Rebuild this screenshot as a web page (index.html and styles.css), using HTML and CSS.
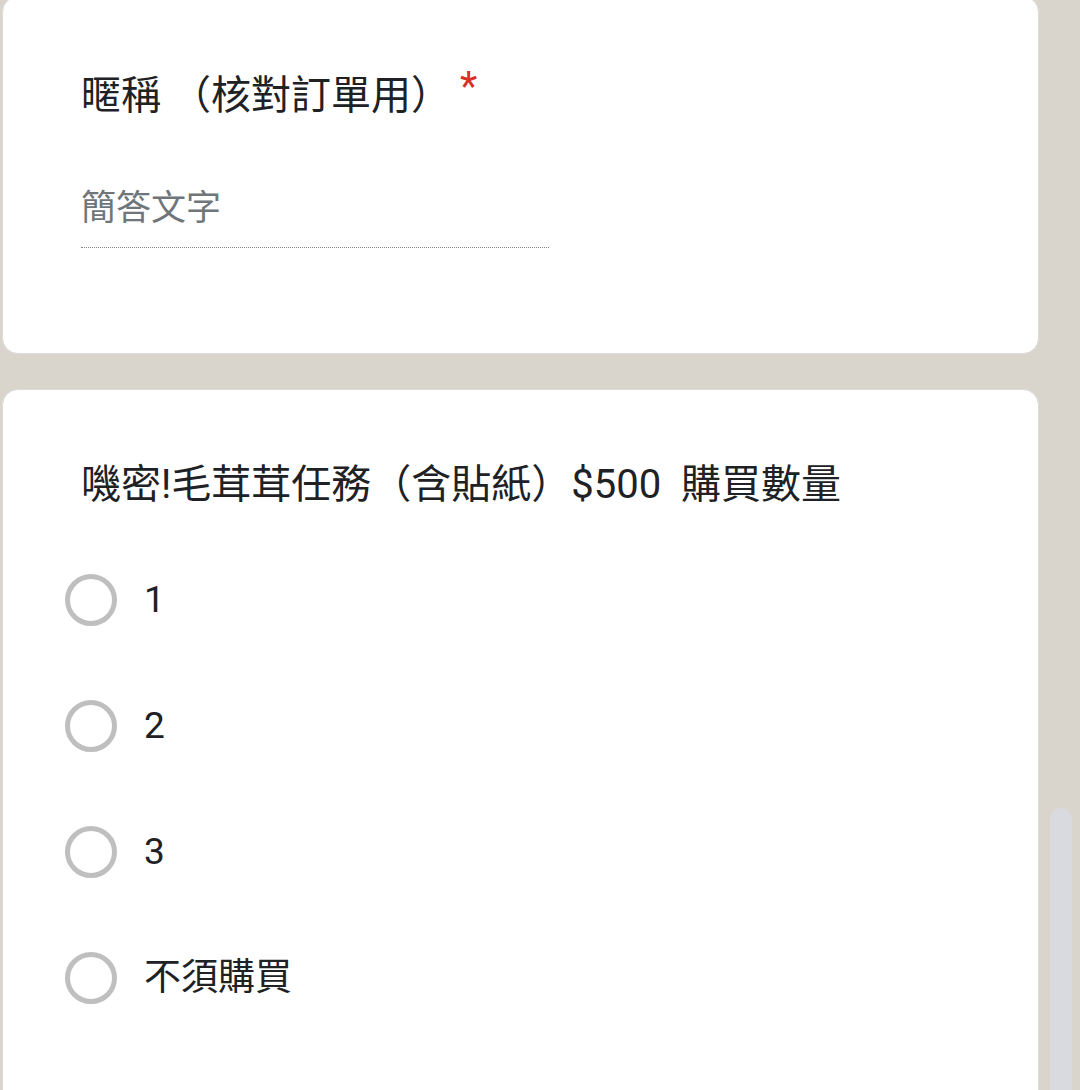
FILE: index.html
```html
<!DOCTYPE html>
<html lang="zh-Hant">
<head>
  <meta charset="UTF-8">
  <meta name="viewport" content="width=device-width, initial-scale=1.0">
  <title>訂購表單</title>
  <link rel="stylesheet" href="styles.css">
</head>
<body>
  <div class="form-page">
    <!-- Nickname question -->
    <div class="question-card first">
      <div class="question-title">暱稱 （核對訂單用）<span class="required">*</span></div>
      <div class="text-input">
        <span class="placeholder">簡答文字</span>
      </div>
    </div>

    <!-- Quantity question -->
    <div class="question-card">
      <div class="question-title">嘰密!毛茸茸任務（含貼紙）$500  購買數量</div>
      <ul class="options">
        <li class="option"><span class="radio"></span><span class="option-label">1</span></li>
        <li class="option"><span class="radio"></span><span class="option-label">2</span></li>
        <li class="option"><span class="radio"></span><span class="option-label">3</span></li>
        <li class="option"><span class="radio"></span><span class="option-label">不須購買</span></li>
      </ul>
    </div>
  </div>

  <!-- Scrollbar thumb drawn over the page edge -->
  <div class="scroll-thumb"></div>
</body>
</html>
```

FILE: styles.css
```css
* {
  margin: 0;
  padding: 0;
  box-sizing: border-box;
}

html,
body {
  height: 100%;
  overflow: hidden;
}

body {
  background: #d9d5cc;
  color: #202124;
  font-family: Roboto, "Noto Sans CJK TC", sans-serif;
}

.form-page {
  display: flex;
  flex-direction: column;
  gap: 35px;
  padding-left: 2px;
  width: 1039px;
}

.question-card {
  background: #fff;
  border: 1px solid #dcdcdc;
  border-radius: 16px;
  padding: 67px 78px 200px;
}

.question-card.first {
  margin-top: -4px;
  padding-top: 70px;
  padding-bottom: 105px;
}

.question-title {
  font-size: 40px;
  line-height: 56px;
  white-space: pre-wrap;
}

.required {
  color: #d93025;
  padding-left: 9px;
  line-height: 1;
  vertical-align: 9px;
}

/* Short answer field */
.text-input {
  width: 468px;
  margin-top: 61px;
  padding-bottom: 14px;
  border-bottom: 1px dotted #80868b;
}

.placeholder {
  display: block;
  font-size: 35px;
  line-height: 48px;
  color: #70757a;
}

/* Radio options */
.options {
  list-style: none;
  margin-top: 24px;
  margin-left: -16px;
}

.option {
  display: flex;
  align-items: center;
  gap: 27px;
  height: 126px;
}

.radio {
  width: 52px;
  height: 52px;
  border: 5px solid #bfbfbf;
  border-radius: 50%;
  flex-shrink: 0;
}

.option-label {
  font-size: 37px;
  line-height: 48px;
}

.scroll-thumb {
  position: fixed;
  top: 808px;
  right: 8px;
  bottom: 0;
  width: 22px;
  background: #d9dadf;
  border-radius: 11px 11px 0 0;
}
```
